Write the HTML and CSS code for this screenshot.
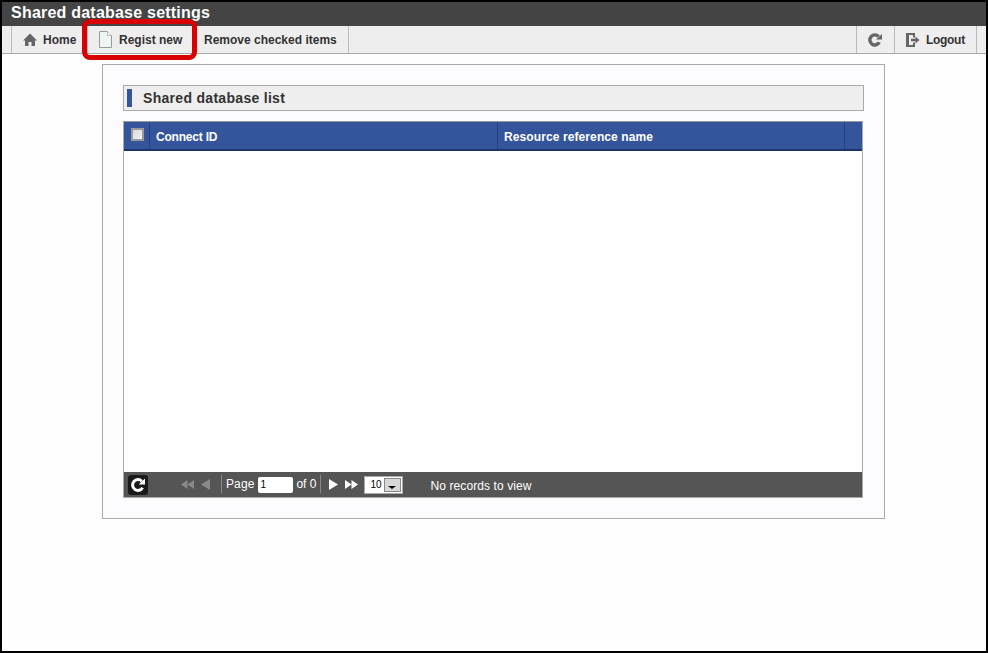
FILE: index.html
```html
<!DOCTYPE html>
<html lang="en">
<head>
<meta charset="utf-8">
<title>Shared database settings</title>
<link rel="stylesheet" href="styles.css">
</head>
<body>
<div class="frame">
  <header class="title">Shared database settings</header>
  <nav class="toolbar">
    <a class="tool tool-home">
      <svg class="ico" width="14" height="14" viewBox="0 0 14 14"><path fill="#666" d="M7 .5 L14 7.5 L12 7.5 L12 13 L8.5 13 L8.5 9 L5.5 9 L5.5 13 L2 13 L2 7.5 L0 7.5 Z"/></svg>
      Home
    </a>
    <a class="tool tool-new">
      <svg class="ico" width="13" height="17" viewBox="0 0 13 17"><path fill="#eef5f5" stroke="#9a9a9a" d="M.5 .5 H8.5 L12.5 4.5 V16.5 H.5 Z"/><path fill="#fff" stroke="#b5b5b5" d="M8.5 .5 V4.5 H12.5"/></svg>
      Regist new
    </a>
    <a class="tool tool-remove">Remove checked items</a>
    <span class="spacer"></span>
    <a class="tool tool-reload">
      <svg width="14" height="14" viewBox="0 0 14 14"><path fill="none" stroke="#666" stroke-width="3.4" d="M11.3 9.2 A5 5 0 1 1 10.6 3.6"/><path fill="#666" d="M8 6.6 H14 V1 Z"/></svg>
    </a>
    <a class="tool tool-logout">
      <svg class="ico" width="14" height="14" viewBox="0 0 14 14"><path fill="#666" fill-rule="evenodd" d="M0 0 H9 V4.5 H7 V2 H3 V12 H7 V9.5 H9 V14 H0 Z"/><path fill="#666" d="M5 5.8 H9.5 V3.6 L13.5 7 L9.5 10.4 V8.2 H5 Z"/></svg>
      <span class="logout-text">Logout</span>
    </a>
  </nav>
  <main class="panel">
    <h2 class="heading">Shared database list</h2>
    <section class="grid">
      <div class="grid-head">
        <div class="cell cell-check"><span class="checkbox"></span></div>
        <div class="cell cell-id">Connect ID</div>
        <div class="cell cell-name">Resource reference name</div>
        <div class="cell cell-end"></div>
      </div>
      <div class="grid-body"></div>
      <div class="pager">
        <button class="reload" type="button" aria-label="Reload">
          <svg width="16" height="16" viewBox="0 0 16 16"><path fill="none" stroke="#fff" stroke-width="3" d="M12.6 10.8 A5.4 5.4 0 1 1 11.8 4.2"/><path fill="#fff" d="M8.6 7.6 H15 V1.4 Z"/></svg>
        </button>
        <div class="nav nav-first">
          <svg width="13" height="9" viewBox="0 0 13 9"><path fill="#8a8a8a" d="M6.5 0 V9 L0 4.5 Z M13 0 V9 L6.5 4.5 Z"/></svg>
          <svg width="9" height="11" viewBox="0 0 9 11"><path fill="#8a8a8a" d="M9 0 V11 L0 5.5 Z"/></svg>
        </div>
        <span class="sep"></span>
        <span class="page-label">Page</span>
        <input class="page-input" type="text" value="1">
        <span class="page-of">of 0</span>
        <span class="sep"></span>
        <div class="nav nav-next">
          <svg width="9" height="11" viewBox="0 0 9 11"><path fill="#fff" d="M0 0 V11 L9 5.5 Z"/></svg>
          <svg width="13" height="9" viewBox="0 0 13 9"><path fill="#fff" d="M0 0 V9 L6.5 4.5 Z M6.5 0 V9 L13 4.5 Z"/></svg>
        </div>
        <div class="select"><span class="select-val">10</span><span class="select-btn"><i class="caret"></i></span></div>
        <span class="records">No records to view</span>
      </div>
    </section>
  </main>
  <div class="highlight"></div>
</div>
</body>
</html>
```
FILE: styles.css
```css
* { box-sizing: border-box; }
html, body { margin: 0; height: 100%; }
body { font-family: "Liberation Sans", Arial, sans-serif; background: #fff; }
.frame {
  position: relative;
  width: 988px;
  height: 653px;
  border: 2px solid #000;
  display: flex;
  flex-direction: column;
  background: #fefefe;
}
.title {
  height: 24px;
  flex: none;
  background: #444;
  color: #fff;
  font-size: 16px;
  font-weight: bold;
  line-height: 22px;
  padding-left: 9px;
  letter-spacing: .22px;
}
.toolbar {
  height: 28px;
  flex: none;
  display: flex;
  background: #eee;
  border-bottom: 1px solid #aaa;
  padding: 0 9px;
}
.tool {
  display: flex;
  align-items: center;
  height: 27px;
  font-size: 12px;
  font-weight: bold;
  color: #333;
  border-left: 1px solid #bbb;
}
.ico { margin-right: 6px; }
.tool-home { width: 76px; padding-left: 11px; }
.tool-new { width: 103px; padding-left: 11px; }
.tool-new .ico { margin-right: 7px; }
.tool-remove { width: 159px; padding-left: 14px; border-left: 0; border-right: 1px solid #bbb; white-space: nowrap; }
.spacer { flex: 1; }
.tool-reload { width: 38px; padding-left: 11px; }
.tool-logout { width: 83px; padding-left: 11px; border-right: 1px solid #bbb; }
.logout-text { letter-spacing: -.3px; }
.panel {
  width: 783px;
  height: 455px;
  margin: 10px 0 0 100px;
  padding: 20px;
  border: 1px solid #aaa;
  background: #fcfcff;
  display: flex;
  flex-direction: column;
}
.heading {
  margin: 0;
  width: 741px;
  height: 26px;
  flex: none;
  border: 1px solid #aaa;
  background: #eee;
  color: #333;
  font-size: 14px;
  font-weight: bold;
  line-height: 24px;
  padding-left: 19px;
  letter-spacing: .3px;
  position: relative;
}
.heading::before {
  content: "";
  position: absolute;
  left: 3px;
  top: 3px;
  width: 5px;
  height: 18px;
  background: #34559c;
}
.grid {
  width: 740px;
  height: 377px;
  margin-top: 10px;
  border: 1px solid #aaa;
  border-top-color: #999;
  display: flex;
  flex-direction: column;
  background: #fff;
}
.grid-head {
  height: 29px;
  flex: none;
  display: flex;
  background: #34559c;
  border-bottom: 2px solid #1e3468;
  color: #fff;
  font-size: 12px;
  font-weight: bold;
  line-height: 30px;
}
.cell { border-right: 1px solid #22407f; padding-left: 6px; flex: none; }
.cell-check { width: 26px; padding: 6px 0 0 7px; }
.cell-id { width: 348px; letter-spacing: -.2px; }
.cell-name { width: 347px; letter-spacing: .1px; }
.cell-end { border-right: 0; flex: 1; }
.checkbox {
  display: block;
  width: 13px;
  height: 13px;
  border: 2px solid #9a9a9a;
  background: linear-gradient(135deg, #d8d8d8, #f4f4f4);
}
.grid-body { flex: 1; }
.pager {
  height: 25px;
  flex: none;
  display: flex;
  align-items: center;
  background: #555;
  color: #fff;
  font-size: 12px;
}
.reload {
  width: 20px;
  height: 20px;
  margin: 1px 0 0 4px;
  padding: 2px;
  border: 0;
  border-radius: 3px;
  background: #1a1a1a;
  display: flex;
}
.nav { display: flex; align-items: center; gap: 7px; }
.nav-first { margin-left: 33px; }
.sep { width: 1px; height: 18px; background: #888; margin-top: -1px; }
.nav-first + .sep { margin-left: 11px; }
.page-label { margin: -1px 4px 0 4px; letter-spacing: .1px; }
.page-input {
  width: 35px;
  height: 16px;
  margin: 0;
  padding: 0 2px;
  border: 0;
  border-radius: 2px;
  background: #fff;
  font: 10px "Liberation Sans", Arial, sans-serif;
  color: #000;
}
.page-of { margin: -1px 4px 0 3px; }
.nav-next { margin-left: 8px; gap: 7px; }
.select {
  width: 39px;
  height: 18px;
  margin-left: 6px;
  border: 1px solid #aaa;
  background: #fff;
  display: flex;
  align-items: center;
  color: #000;
  font-size: 10px;
  padding-left: 5px;
}
.select-val { flex: 1; }
.select-btn {
  width: 17px;
  height: 14px;
  margin-right: 1px;
  border: 1px solid #888;
  background: #d8d8d8;
  position: relative;
}
.caret {
  position: absolute;
  left: 3px;
  top: 7px;
  border: 4px solid transparent;
  border-top: 3px solid #000;
  border-bottom: 0;
}
.records { margin-left: 27px; padding-top: 2px; letter-spacing: .1px; }
.highlight {
  position: absolute;
  left: 80px;
  top: 17px;
  width: 115px;
  height: 41px;
  border: 5px solid #d80000;
  border-radius: 8px;
}
```
